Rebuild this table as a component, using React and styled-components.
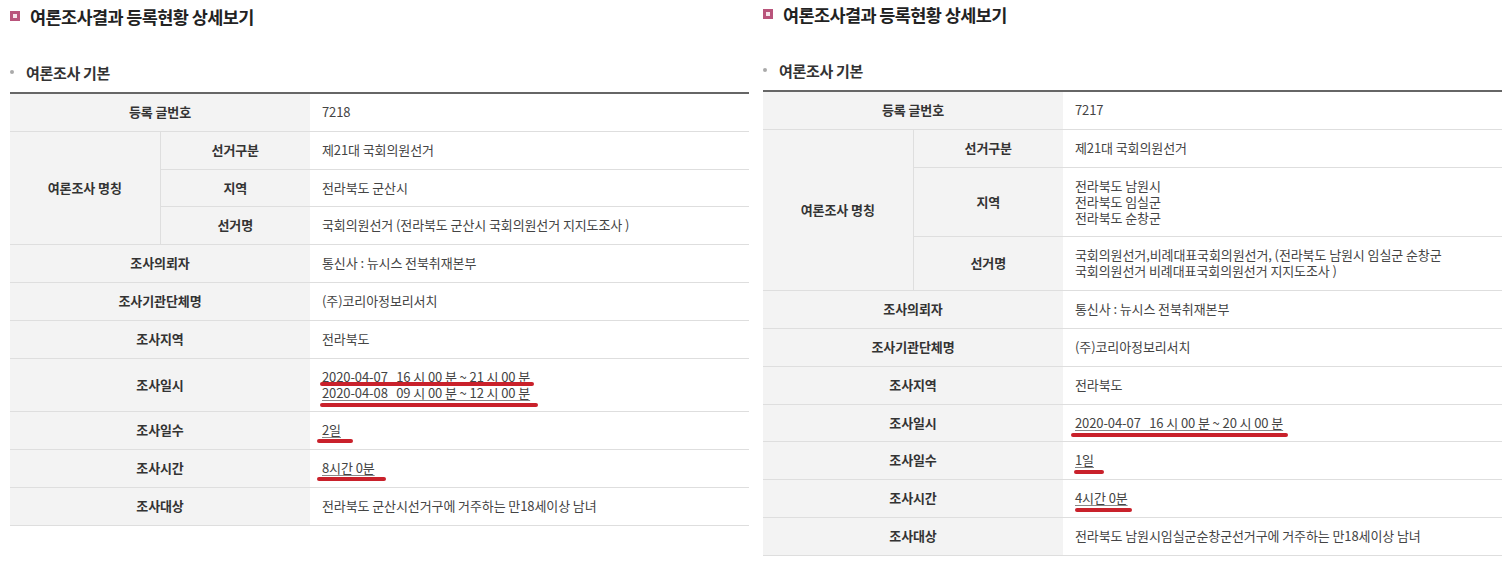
import React from 'react'
import styled, { createGlobalStyle } from 'styled-components'

const Global = createGlobalStyle`
html, body {
  margin: 0;
  padding: 0;
  background: #fff;
  overflow: hidden;
}
body {
  width: 1512px;
  font-family: "Noto Sans CJK KR", "Noto Sans", sans-serif;
  color: #333;
}
`

const left = {
  top: 5,
  no: '7218',
  kind: '제21대 국회의원선거',
  region: ['전라북도 군산시'],
  name: ['국회의원선거 (전라북도 군산시 국회의원선거 지지도조사 )'],
  client: '통신사 : 뉴시스 전북취재본부',
  org: '(주)코리아정보리서치',
  area: '전라북도',
  dates: [
    { text: '2020-04-07\u00a0\u00a0\u00a016 시 00 분 ~ 21 시 00 분', l: 2, r: 4, b: 0 },
    { text: '2020-04-08\u00a0\u00a0\u00a009 시 00 분 ~ 12 시 00 분', l: 2, r: 8, b: -5 },
  ],
  days: { text: '2일', l: 5, r: 12, b: -4 },
  hours: { text: '8시간 0분', l: 5, r: 11, b: -4 },
  target: '전라북도 군산시선거구에 거주하는 만18세이상 남녀',
}

const right = {
  top: 3,
  no: '7217',
  kind: '제21대 국회의원선거',
  region: ['전라북도 남원시', '전라북도 임실군', '전라북도 순창군'],
  name: [
    '국회의원선거,비례대표국회의원선거, (전라북도 남원시 임실군 순창군',
    '국회의원선거 비례대표국회의원선거 지지도조사 )',
  ],
  client: '통신사 : 뉴시스 전북취재본부',
  org: '(주)코리아정보리서치',
  area: '전라북도',
  dates: [{ text: '2020-04-07\u00a0\u00a0\u00a016 시 00 분 ~ 20 시 00 분', l: 4, r: 5, b: -5 }],
  days: { text: '1일', l: 1, r: 10, b: -5 },
  hours: { text: '4시간 0분', l: 0, r: 4, b: -5 },
  target: '전라북도 남원시임실군순창군선거구에 거주하는 만18세이상 남녀',
}

const Lines = ({ items }) =>
  items.map((t, i) => <Line key={i}>{t}</Line>)

const Marked = ({ m }) => (
  <Line>
    <Mark $l={m.l} $r={m.r} $b={m.b}>{m.text}</Mark>
  </Line>
)

const Panel = ({ d }) => (
  <Wrap $top={d.top}>
    <Title>
      <TitleIcon />
      여론조사결과 등록현황 상세보기
    </Title>
    <Sub>
      <Dot />
      여론조사 기본
    </Sub>
    <Table>
      <colgroup>
        <col style={{ width: 150 }} />
        <col style={{ width: 150 }} />
        <col />
      </colgroup>
      <tbody>
        <tr>
          <Th colSpan={2}>등록 글번호</Th>
          <Td>{d.no}</Td>
        </tr>
        <tr>
          <Th rowSpan={3} $split>여론조사 명칭</Th>
          <Th>선거구분</Th>
          <Td>{d.kind}</Td>
        </tr>
        <tr>
          <Th>지역</Th>
          <Td><Lines items={d.region} /></Td>
        </tr>
        <tr>
          <Th>선거명</Th>
          <Td><Lines items={d.name} /></Td>
        </tr>
        <tr>
          <Th colSpan={2}>조사의뢰자</Th>
          <Td>{d.client}</Td>
        </tr>
        <tr>
          <Th colSpan={2}>조사기관단체명</Th>
          <Td>{d.org}</Td>
        </tr>
        <tr>
          <Th colSpan={2}>조사지역</Th>
          <Td>{d.area}</Td>
        </tr>
        <tr>
          <Th colSpan={2}>조사일시</Th>
          <Td>
            {d.dates.map((m, i) => <Marked key={i} m={m} />)}
          </Td>
        </tr>
        <tr>
          <Th colSpan={2}>조사일수</Th>
          <Td><Marked m={d.days} /></Td>
        </tr>
        <tr>
          <Th colSpan={2}>조사시간</Th>
          <Td><Marked m={d.hours} /></Td>
        </tr>
        <tr>
          <Th colSpan={2}>조사대상</Th>
          <Td>{d.target}</Td>
        </tr>
      </tbody>
    </Table>
  </Wrap>
)

const App = () => (
  <>
    <Global />
    <Page>
      <Panel d={left} />
      <Panel d={right} />
    </Page>
  </>
)

const Page = styled.div`
display: flex;
flex-direction: row;
align-items: flex-start;
gap: 14px;
padding-left: 10px;
width: 1512px;
box-sizing: border-box;
overflow: hidden;
`

const Wrap = styled.div`
flex: 0 0 739px;
width: 739px;
padding-top: ${p => p.$top}px;
`

const Title = styled.h2`
display: flex;
align-items: center;
gap: 10px;
margin: 0;
height: 22px;
font-size: 17.5px;
font-weight: 700;
color: #222;
letter-spacing: -0.6px;
`

const TitleIcon = styled.span`
width: 10px;
height: 10px;
box-sizing: border-box;
border: 3px solid #b9547b;
background: #f6e4ea;
`

const Sub = styled.h3`
display: flex;
align-items: center;
gap: 12px;
margin: 35px 0 0;
height: 20px;
font-size: 15px;
font-weight: 700;
color: #333;
letter-spacing: -0.3px;
`

const Dot = styled.span`
width: 4px;
height: 4px;
border-radius: 50%;
background: #aaa;
`

const Table = styled.table`
margin-top: 10px;
width: 100%;
table-layout: fixed;
border-collapse: collapse;
border-top: 2px solid #666;
border-bottom: 1px solid #666;
font-size: 13px;
line-height: 16px;
letter-spacing: -0.1px;
`

const Th = styled.th`
background: #f3f3f3;
color: #333;
font-weight: 700;
text-align: center;
padding: 10px 8px 10.8px;
border-bottom: 1px solid #dedede;
border-right: ${p => (p.$split ? '1px solid #dedede' : 'none')};
`

const Td = styled.td`
background: #fff;
color: #444;
text-align: left;
padding: 10px 12px 10.8px;
border-bottom: 1px solid #dedede;
`

const Line = styled.div`
white-space: nowrap;
`

const Mark = styled.span`
position: relative;
text-decoration: underline;
text-decoration-color: #888;
text-underline-offset: 2px;
&::after {
  content: '';
  position: absolute;
  left: -${p => p.$l}px;
  right: -${p => p.$r}px;
  bottom: ${p => p.$b}px;
  height: 4px;
  border-radius: 2px;
  background: #c9212b;
}
`

export default App
